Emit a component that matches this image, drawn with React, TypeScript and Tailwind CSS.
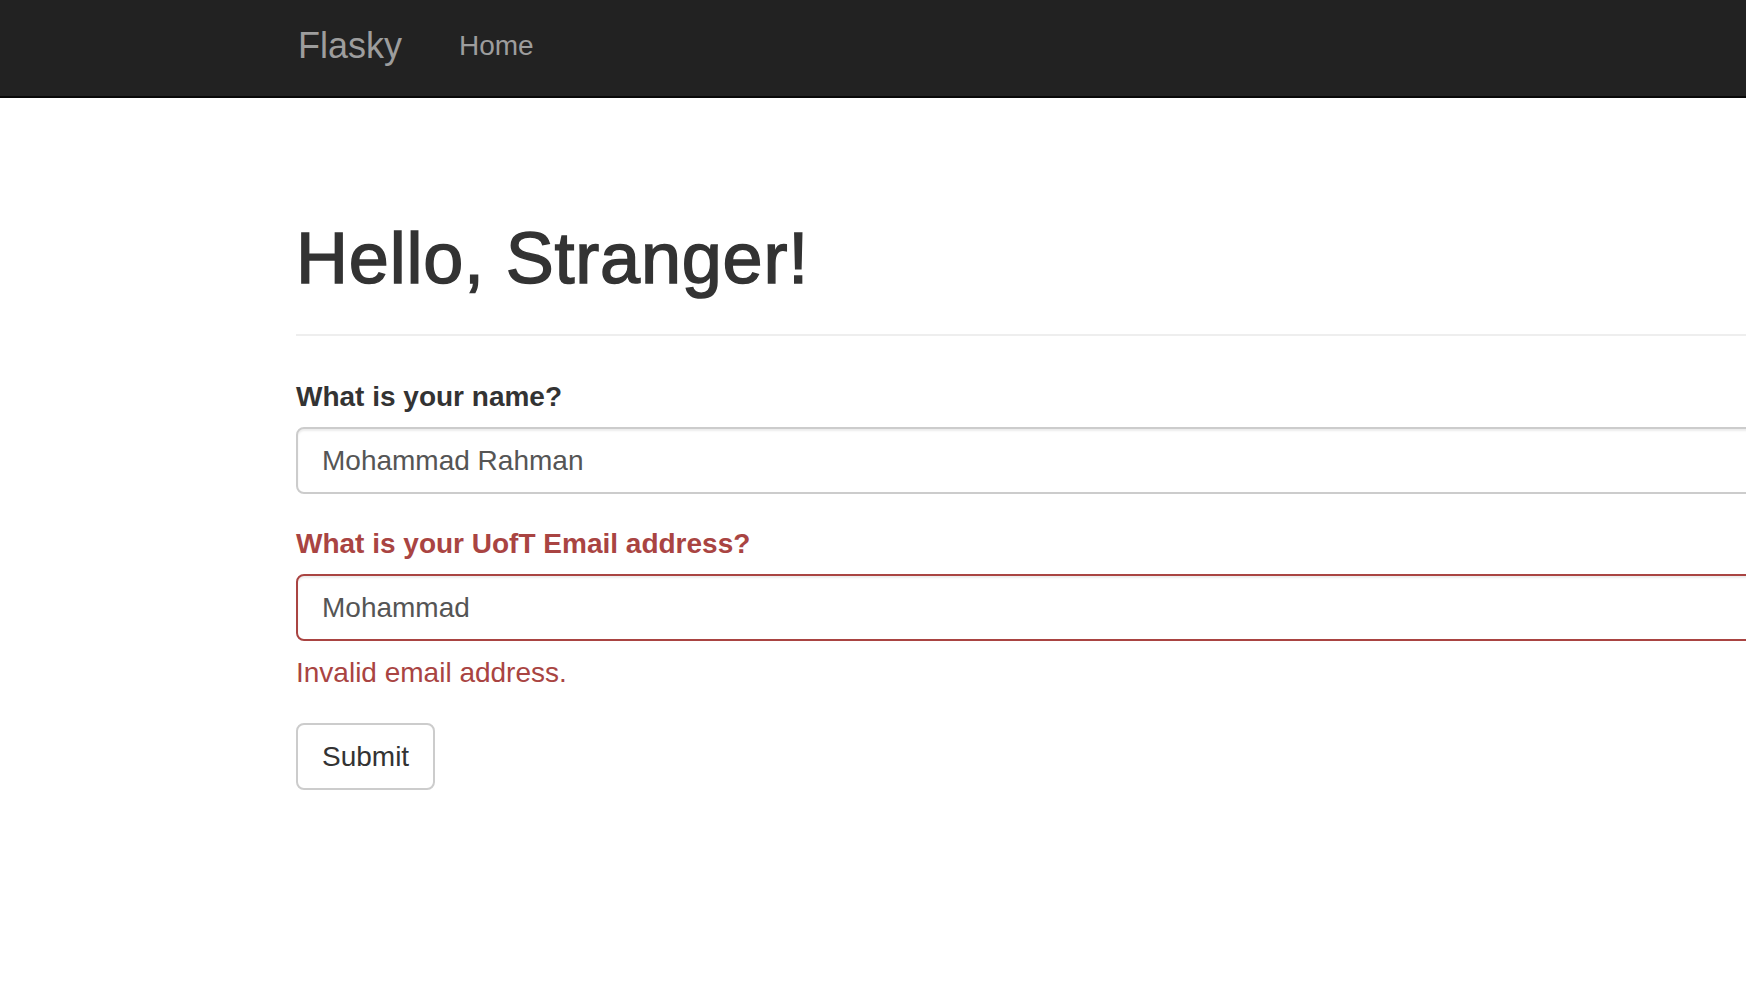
import { useState } from 'react';

const fontStack = "font-['Liberation_Sans','Helvetica_Neue',Arial,sans-serif]";

const Navbar = () => (
  <nav className="h-[98px] w-full border-b-2 border-[#080808] bg-[#222222]">
    <div className="flex h-[96px] items-center pb-[5px] pl-[298px]">
      <a href="#" className="w-[161px] text-[36px] leading-[48px] text-[#9d9d9d]">
        Flasky
      </a>
      <a href="#" className="text-[28px] leading-[40px] text-[#9d9d9d] hover:text-white">
        Home
      </a>
    </div>
  </nav>
);

type FieldProps = {
  label: string;
  value: string;
  onChange: (value: string) => void;
  error?: string;
};

const Field = ({ label, value, onChange, error }: FieldProps) => (
  <div className="flex flex-col">
    <label
      className={`mb-[10px] text-[28px] font-bold leading-[40px] ${
        error ? 'text-[#a94442]' : 'text-[#333333]'
      }`}
    >
      {label}
    </label>
    <input
      value={value}
      onChange={(event) => onChange(event.target.value)}
      className={`h-[67px] w-full rounded-[8px] border-2 bg-white px-[24px] text-[28px] text-[#555555] shadow-[inset_0_2px_2px_rgba(0,0,0,0.075)] outline-none ${
        error ? 'border-[#a94442]' : 'border-[#cccccc]'
      }`}
    />
    {error ? (
      <p className="mt-[12px] text-[28px] leading-[40px] text-[#a94442]">{error}</p>
    ) : null}
  </div>
);

export default function App() {
  const [name, setName] = useState('Mohammad Rahman');
  const [email, setEmail] = useState('Mohammad');

  return (
    <div className={`min-h-[1004px] w-full overflow-hidden bg-white ${fontStack}`}>
      <Navbar />

      <main className="pl-[296px]">
        <div className="w-[1500px]">
          <div className="mt-[120px] border-b-2 border-[#eeeeee] pb-[36px]">
            <h1 className="text-[72px] leading-[80px] tracking-[0.8px] text-[#333333] [-webkit-text-stroke:1.5px_#333333]">
              Hello, Stranger!
            </h1>
          </div>

          <form
            className="mt-[41px] flex flex-col gap-[30px]"
            onSubmit={(event) => event.preventDefault()}
          >
            <Field label="What is your name?" value={name} onChange={setName} />
            <Field
              label="What is your UofT Email address?"
              value={email}
              onChange={setEmail}
              error="Invalid email address."
            />
            <div>
              <button
                type="submit"
                className="h-[67px] rounded-[8px] border-2 border-[#cccccc] bg-white px-[24px] text-[28px] text-[#333333] hover:bg-[#e6e6e6]"
              >
                Submit
              </button>
            </div>
          </form>
        </div>
      </main>
    </div>
  );
}
